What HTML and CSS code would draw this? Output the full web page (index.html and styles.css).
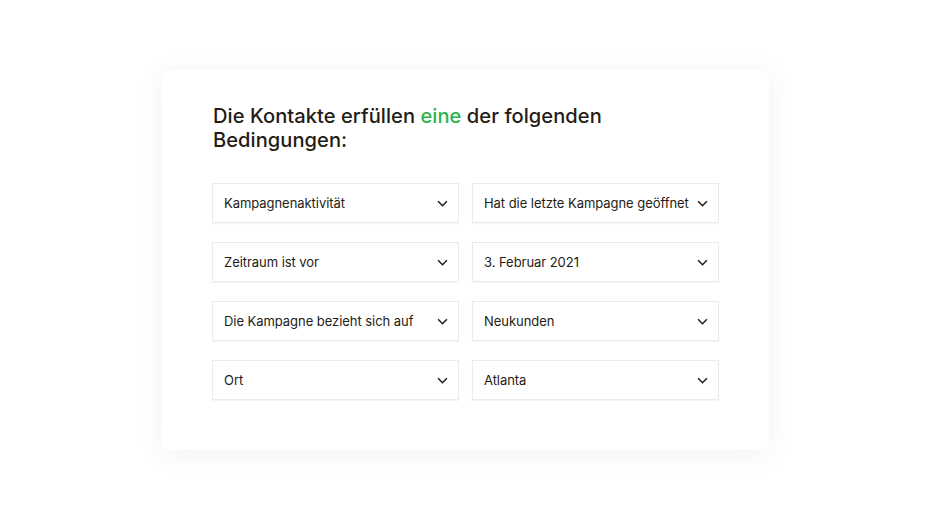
FILE: index.html
```html
<!DOCTYPE html>
<html lang="de">
<head>
<meta charset="utf-8">
<link rel="stylesheet" href="styles.css">
</head>
<body>
<div class="card">
  <h1 class="title">Die Kontakte erfüllen <span class="accent">eine</span> der folgenden Bedingungen:</h1>
  <div class="grid">
    <div class="select"><span>Kampagnenaktivität</span><svg class="chev" viewBox="0 0 10 6"><path d="M1 1l4 4 4-4"/></svg></div>
    <div class="select"><span>Hat die letzte Kampagne geöffnet</span><svg class="chev" viewBox="0 0 10 6"><path d="M1 1l4 4 4-4"/></svg></div>
    <div class="select"><span>Zeitraum ist vor</span><svg class="chev" viewBox="0 0 10 6"><path d="M1 1l4 4 4-4"/></svg></div>
    <div class="select"><span>3. Februar 2021</span><svg class="chev" viewBox="0 0 10 6"><path d="M1 1l4 4 4-4"/></svg></div>
    <div class="select"><span>Die Kampagne bezieht sich auf</span><svg class="chev" viewBox="0 0 10 6"><path d="M1 1l4 4 4-4"/></svg></div>
    <div class="select"><span>Neukunden</span><svg class="chev" viewBox="0 0 10 6"><path d="M1 1l4 4 4-4"/></svg></div>
    <div class="select"><span>Ort</span><svg class="chev" viewBox="0 0 10 6"><path d="M1 1l4 4 4-4"/></svg></div>
    <div class="select"><span>Atlanta</span><svg class="chev" viewBox="0 0 10 6"><path d="M1 1l4 4 4-4"/></svg></div>
  </div>
</div>
</body>
</html>
```
FILE: styles.css
```css
html, body {
  margin: 0;
  padding: 0;
  background: #ffffff;
}
body {
  width: 930px;
  height: 522px;
  overflow: hidden;
  font-family: "Inter", "Liberation Sans", sans-serif;
  color: #241c15;
}
.card {
  box-sizing: border-box;
  margin: 70px 0 0 162px;
  width: 607px;
  height: 380px;
  background: #ffffff;
  border-radius: 8px;
  box-shadow: 0 4px 30px rgba(0, 0, 0, 0.06);
  padding: 34px 0 0 50px;
}
.title {
  margin: 0;
  padding-left: 1px;
  width: 430px;
  font-size: 20.1px;
  line-height: 24px;
  font-weight: 500;
  letter-spacing: 0.05px;
}
.accent {
  color: #2fb24c;
}
.grid {
  margin-top: 31px;
  display: grid;
  grid-template-columns: 247px 247px;
  column-gap: 13px;
  row-gap: 19px;
}
.select {
  box-sizing: border-box;
  height: 40px;
  border: 1px solid #ebebeb;
  box-shadow: 0 1px 1px rgba(0, 0, 0, 0.04);
  display: flex;
  align-items: center;
  justify-content: space-between;
  padding: 0 10px 0 11px;
  font-size: 13px;
  letter-spacing: -0.05px;
  background: #fff;
}
.chev {
  width: 11px;
  height: 7px;
  fill: none;
  stroke: #241c15;
  stroke-width: 1.4;
}
```
